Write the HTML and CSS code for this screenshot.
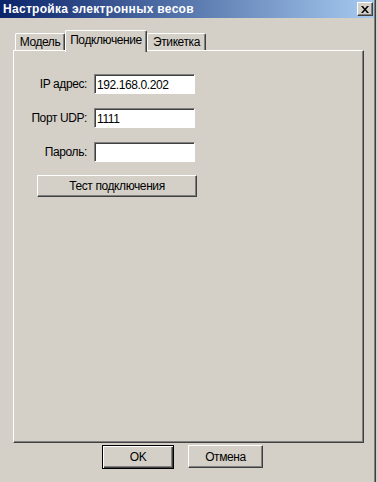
FILE: index.html
```html
<!DOCTYPE html>
<html lang="ru">

<head>
  <meta charset="UTF-8">
  <meta name="viewport" content="width=device-width, initial-scale=1.0">
  <title>Настройка электронных весов</title>
  <link rel="stylesheet" href="styles.css">
</head>

<body>

  <!-- dialog window -->
  <div class="window">
    <div class="frame">

      <!-- title bar -->
      <div class="titlebar">
        <span class="title">Настройка электронных весов</span>
        <button class="close-btn" type="button">
          <svg width="8" height="7" viewBox="0 0 8 7">
            <path d="M0 0h2l2 2.5L6 0h2L5 3.5 8 7H6L4 4.5 2 7H0l3-3.5z" fill="#000" />
          </svg>
        </button>
      </div>

      <!-- tabs -->
      <div class="tabs">
        <div class="tab tab-model">Модель</div>
        <div class="tab tab-conn active">Подключение</div>
        <div class="tab tab-label">Этикетка</div>
      </div>

      <!-- tab page -->
      <div class="panel">
        <div class="form">
          <label class="field-label" for="ip">IP адрес:</label>
          <input class="field" id="ip" type="text" value="192.168.0.202">

          <label class="field-label" for="port">Порт UDP:</label>
          <input class="field" id="port" type="text" value="1111">

          <label class="field-label" for="pass">Пароль:</label>
          <input class="field" id="pass" type="password" value="">
        </div>
        <button class="btn test-btn" type="button">Тест подключения</button>
      </div>

      <!-- dialog buttons -->
      <div class="actions">
        <button class="btn ok-btn" type="button">OK</button>
        <button class="btn cancel-btn" type="button">Отмена</button>
      </div>

    </div>
  </div>

</body>

</html>
```

FILE: styles.css
```css
/* base */
body {
  margin: 0;
  padding: 0;
  background-color: #d4d0c8;
  font-family: "Liberation Sans", Arial, sans-serif;
  font-size: 12px;
  letter-spacing: -0.4px;
  color: #000;
}

/* window frame */
.window {
  width: 375px;
  height: 482px;
  border-right: 1px solid #404040;
}

.frame {
  height: 482px;
  border-right: 1px solid #808080;
}

/* title bar */
.titlebar {
  height: 18px;
  display: flex;
  align-items: center;
  justify-content: space-between;
  padding: 0 1px 0 3px;
  background: linear-gradient(to right, #0a246a, #a6caf0);
}

.title {
  color: white;
  font-weight: bold;
  font-size: 12px;
  letter-spacing: 0.3px;
}

.close-btn {
  width: 16px;
  height: 14px;
  padding: 0;
  display: flex;
  align-items: center;
  justify-content: center;
  background-color: #d4d0c8;
  border: 1px solid;
  border-color: #fff #404040 #404040 #fff;
  box-shadow: inset -1px -1px #808080;
}

/* tabs */
.tabs {
  display: flex;
  align-items: flex-end;
  height: 20px;
  margin: 12px 0 0 15px;
}

.tab {
  height: 17px;
  box-sizing: border-box;
  padding-top: 1px;
  text-align: center;
  border-top: 1px solid #fff;
  border-left: 1px solid #fff;
  border-right: 1px solid #404040;
  box-shadow: inset -1px 0 #808080;
  border-radius: 2px 2px 0 0;
  background-color: #d4d0c8;
}

.tab-model {
  width: 50px;
}

.tab-conn {
  width: 82px;
}

.tab-label {
  width: 59px;
}

.tab.active {
  position: relative;
  z-index: 1;
  height: 22px;
  margin-bottom: -2px;
  padding-top: 2px;
}

/* tab page */
.panel {
  width: 351px;
  height: 393px;
  box-sizing: border-box;
  margin-left: 13px;
  padding: 23px 0 0 0;
  border: 1px solid;
  border-color: #fff #404040 #404040 #fff;
  box-shadow: inset -1px -1px #808080;
}

.form {
  display: grid;
  grid-template-columns: 73px 101px;
  column-gap: 7px;
  row-gap: 14px;
  align-items: center;
}

.field-label {
  text-align: right;
}

.field {
  height: 20px;
  box-sizing: border-box;
  padding: 1px 2px 0 2px;
  font-family: "Liberation Sans", Arial, sans-serif;
  font-size: 12px;
  letter-spacing: -0.4px;
  background-color: #fff;
  border: 1px solid;
  border-color: #808080 #fff #fff #808080;
  box-shadow: inset 1px 1px #404040;
  outline: none;
}

/* buttons */
.btn {
  height: 23px;
  padding: 0;
  font-family: "Liberation Sans", Arial, sans-serif;
  font-size: 12px;
  letter-spacing: -0.4px;
  color: #000;
  background-color: #d4d0c8;
  border: 1px solid;
  border-color: #fff #404040 #404040 #fff;
  box-shadow: inset -1px -1px #808080;
}

.test-btn {
  display: block;
  width: 160px;
  height: 22px;
  margin: 13px 0 0 23px;
}

.actions {
  display: flex;
  gap: 14px;
  margin: 2px 0 0 102px;
}

.ok-btn {
  width: 72px;
  height: 24px;
  border-color: #000;
  box-shadow: inset 1px 1px #fff, inset -1px -1px #404040, inset -2px -2px #808080;
}

.cancel-btn {
  width: 75px;
}
```
